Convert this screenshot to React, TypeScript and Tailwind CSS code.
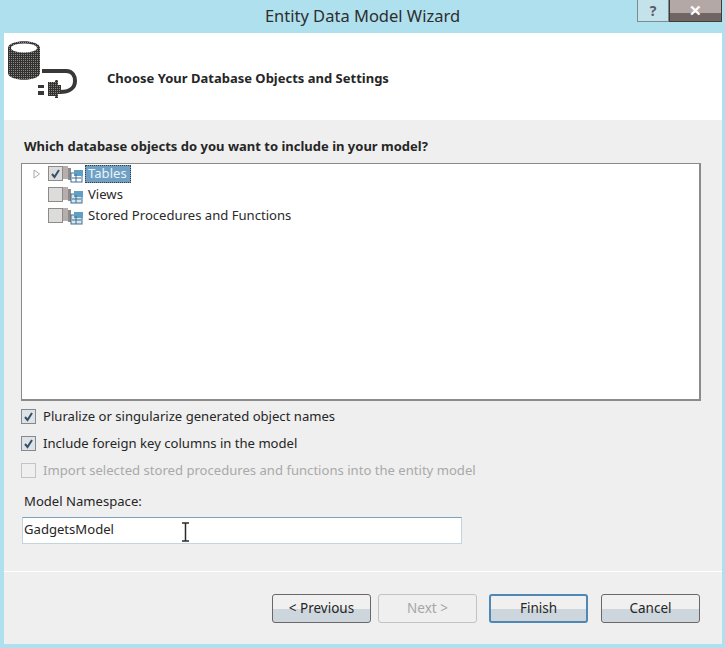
import React from 'react'

const font = { fontFamily: '"Noto Sans", "Open Sans", sans-serif' }

function DbIcon() {
  return (
    <svg width="80" height="70" viewBox="0 0 80 70" className="block">
      <defs>
        <pattern id="dither" width="2" height="2" patternUnits="userSpaceOnUse">
          <rect width="2" height="2" fill="#343131" />
          <rect width="1" height="1" fill="#8a8686" />
        </pattern>
      </defs>
      <path d="M1 8 C1 -1 33 -1 33 8 L33 33 C33 42 1 42 1 33 Z" fill="url(#dither)" />
      <ellipse cx="17" cy="8" rx="13" ry="4.5" fill="#ffffff" />
      <path d="M35 31 H59 C66 31 68 37 68 41 C68 48 62 52 53 52" fill="none" stroke="#3a3737" strokeWidth="4" />
      <path d="M41 42 H48 V40 H51 V45 H54 V54 H51 V58 H48 V56 H41 Z" fill="url(#dither)" />
      <rect x="31" y="45" width="6" height="3" fill="#3a3737" />
      <rect x="31" y="51" width="6" height="4" fill="#3a3737" />
    </svg>
  )
}

function TreeIcon({ selected }: { selected?: boolean }) {
  return (
    <svg width="21" height="18" viewBox="0 0 21 18" className="block shrink-0">
      <rect x="0" y="1" width="5" height="13" fill="#b5aeac" />
      <rect x="5" y="3" width="3" height="12" fill="#8f8987" />
      <rect x="8" y="8" width="11" height="9" fill={selected ? '#ffffff' : '#d8e6ee'} stroke="#3f6f8f" />
      <rect x="11" y="5" width="9" height="6" fill="#5f9fc4" />
      <path d="M9 13 H18 M13 9 V17" stroke="#3f6f8f" strokeWidth="1" />
    </svg>
  )
}

function TreeCheck({ checked }: { checked?: boolean }) {
  return (
    <span className="w-[15px] h-[15px] shrink-0 border border-[#8f8a88] bg-[#dcdcdc] flex items-center justify-center">
      {checked && (
        <svg width="11" height="11" viewBox="0 0 11 11">
          <path d="M2 6 L4.5 9 L9 2" fill="none" stroke="#34506a" strokeWidth="2" />
        </svg>
      )}
    </span>
  )
}

function TreeRow({ label, checked, selected, arrow }: { label: string; checked?: boolean; selected?: boolean; arrow?: boolean }) {
  return (
    <div className="h-[21px] flex items-center">
      <span className="w-[26px] pl-[11px] shrink-0">
        {arrow && (
          <svg width="8" height="10" viewBox="0 0 8 10" className="block">
            <path d="M1 1 L6.5 5 L1 9 Z" fill="#ffffff" stroke="#a8a8a8" />
          </svg>
        )}
      </span>
      <TreeCheck checked={checked} />
      <TreeIcon selected={selected} />
      <span className={selected ? 'ml-[1px] px-[3px] h-[18px] leading-[15px] bg-[#6f9fc2] text-[#e8f4fb] border border-dotted border-[#3d3d3d] -indent-[1px]' : 'ml-[1px] px-[3px] text-[#2b2b2b]'}>
        {label}
      </span>
    </div>
  )
}

function Option({ label, checked, disabled }: { label: string; checked?: boolean; disabled?: boolean }) {
  return (
    <div className="h-[27px] flex items-center gap-[7px]">
      <span className={disabled ? 'w-[15px] h-[15px] border border-[#c4c4c4] bg-[#efefef]' : 'w-[15px] h-[15px] border border-[#7f8a92] bg-[#dfe3e6] flex items-center justify-center'}>
        {checked && (
          <svg width="11" height="11" viewBox="0 0 11 11">
            <path d="M2 6 L4.5 9 L9 2" fill="none" stroke="#34506a" strokeWidth="2" />
          </svg>
        )}
      </span>
      <span className={disabled ? 'text-[#a9a9a9]' : 'text-[#262626]'}>{label}</span>
    </div>
  )
}

function WizardButton({ label, disabled, primary }: { label: string; disabled?: boolean; primary?: boolean }) {
  let cls = 'border-[#6a6766] bg-[linear-gradient(#f0f0f0_50%,#ccd6dc_50%)] text-[#262626]'
  if (disabled) cls = 'border-[#c2c2c2] bg-[#efefef] text-[#a6a6a6]'
  if (primary) cls = 'border-2 border-[#4f88b4] bg-[linear-gradient(#f0f0f0_50%,#ccd6dc_50%)] text-[#262626]'
  return (
    <button className={'w-[99px] h-[29px] border rounded-[3px] flex items-center justify-center text-[13.5px] leading-none ' + cls}>
      {label}
    </button>
  )
}

export default function App() {
  return (
    <div style={font} className="w-[725px] h-[648px] bg-[#aee0ee] relative overflow-hidden">
      <div className="h-[33px] flex items-center justify-center text-[16.5px] text-[#2e2e2e]">
        Entity Data Model Wizard
      </div>

      {/* caption buttons */}
      <div className="absolute top-0 left-[637px] flex h-[22px]">
        <div className="w-[32px] border border-t-0 border-[#7d8a90] bg-[#c4e2ea] flex items-center justify-center text-[14px] font-bold text-[#5b5b66]">?</div>
        <div className="w-[53px] border border-t-0 border-[#3f3b3b] bg-[linear-gradient(#b3a8a5_60%,#6f6664_60%)] flex items-center justify-center text-[15px] font-bold text-white">✕</div>
      </div>

      <div className="ml-[4px] w-[718px] h-[611px] bg-[#efefef] flex flex-col">
        <div className="h-[87px] bg-white flex items-start">
          <div className="pl-[3px] pt-[7px]">
            <DbIcon />
          </div>
          <div className="ml-[20px] pt-[36px] text-[13px] leading-[18px] font-bold text-[#262626]">
            Choose Your Database Objects and Settings
          </div>
        </div>

        <div className="pl-[20px] pt-[16px] text-[13px] leading-[20px] font-bold text-[#262626]">
          Which database objects do you want to include in your model?
        </div>

        <div className="ml-[17px] mt-[7px] w-[680px] h-[238px] bg-white border border-[#8b8b8b] border-r-2 border-b-2 text-[13.1px]">
          <div className="-mt-[1px]">
            <TreeRow label="Tables" checked selected arrow />
            <TreeRow label="Views" />
            <TreeRow label="Stored Procedures and Functions" />
          </div>
        </div>

        <div className="ml-[17px] mt-[2px] text-[13.1px]">
          <Option label="Pluralize or singularize generated object names" checked />
          <Option label="Include foreign key columns in the model" checked />
          <Option label="Import selected stored procedures and functions into the entity model" disabled />
        </div>

        <div className="ml-[20px] mt-[7px] text-[13.1px] leading-[20px] text-[#262626]">Model Namespace:</div>

        <div className="ml-[18px] mt-[6px] w-[440px] h-[27px] bg-white border border-[#c4d4dc] border-t-[#7aa2bd] pl-[1px] text-[13.1px] leading-[23px] text-[#262626] relative">
          GadgetsModel
          <svg width="9" height="20" viewBox="0 0 9 20" className="absolute left-[158px] top-[4px]">
            <path d="M1 1 H8 M4.5 1 V19 M1 19 H8" fill="none" stroke="#2b2b2b" strokeWidth="1.5" />
          </svg>
        </div>

        <div className="mt-[27px] h-[1px] bg-white" />

        <div className="mt-[22px] flex">
          <div className="ml-[268px] flex gap-[7px]">
            <WizardButton label="< Previous" />
            <WizardButton label="Next >" disabled />
          </div>
          <div className="ml-[12px]">
            <WizardButton label="Finish" primary />
          </div>
          <div className="ml-[13px]">
            <WizardButton label="Cancel" />
          </div>
        </div>
      </div>
    </div>
  )
}
